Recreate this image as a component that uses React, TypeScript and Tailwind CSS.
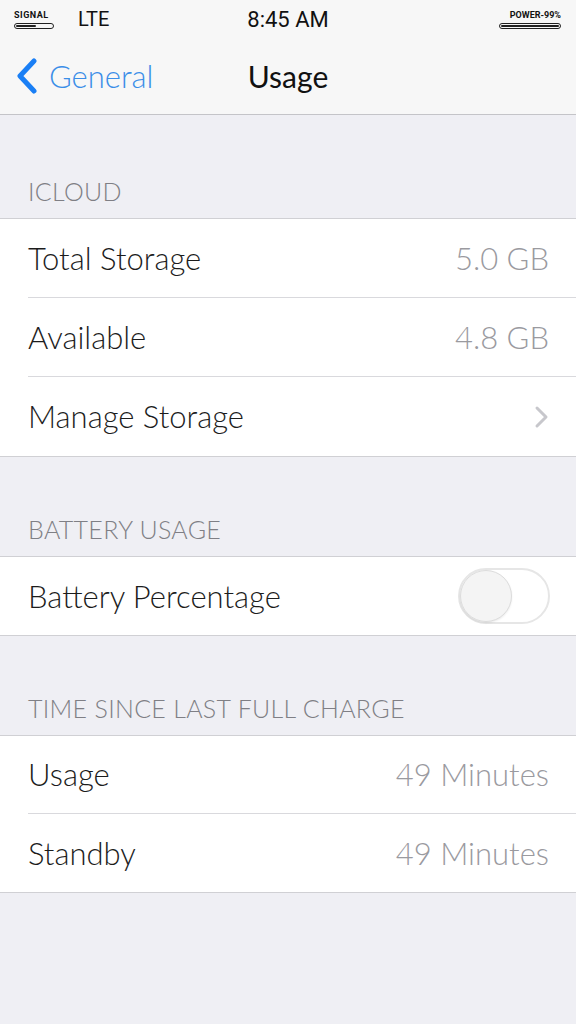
import { ReactNode } from "react";

function Row({ label, value, last, h = "h-[79px]", children }: { label: string; value?: string; last?: boolean; h?: string; children?: ReactNode }) {
  return (
    <div className="pl-[28px]">
      <div className={`flex ${h} items-center justify-between pr-[27px] ${last ? "" : "border-b border-[#d9d9dd]"}`}>
        <span className="text-[31px] font-light text-[#1c1c1c]">{label}</span>
        {value && <span className="text-[31px] font-light text-[#9a9a9f]">{value}</span>}
        {children}
      </div>
    </div>
  );
}

function Header({ title, h = "h-[99px]" }: { title: string; h?: string }) {
  return (
    <div className={`flex ${h} items-end px-[28px] pb-[8px] text-[25px] font-light tracking-[0.3px] text-[#7f7f85]`}>
      {title}
    </div>
  );
}

export default function App() {
  return (
    <div className="min-h-[1024px] w-[576px] bg-[#efeff4] font-['Lato',sans-serif]">
      {/* barre de statut */}
      <div className="bg-[#f7f7f7]">
        <div className="relative flex h-[38px] items-center px-[14px] font-['Roboto',sans-serif] text-[#111]">
          <div className="flex flex-col items-start">
            <span className="text-[9px] font-bold leading-[10px] tracking-[0.5px]">SIGNAL</span>
            <div className="mt-[3px] h-[6px] w-[40px] rounded-full border border-[#222] p-[1px]">
              <div className="h-full w-[20px] rounded-full bg-[#222]" />
            </div>
          </div>
          <span className="ml-[24px] text-[20px]">LTE</span>
          <span className="absolute left-1/2 -translate-x-1/2 text-[22px]">8:45 AM</span>
          <div className="ml-auto mr-[1px] flex flex-col items-end">
            <span className="text-[9px] font-bold leading-[10px]">POWER-99%</span>
            <div className="mt-[3px] h-[6px] w-[62px] rounded-full border border-[#222] p-[1px]">
              <div className="h-full w-full rounded-full bg-[#222]" />
            </div>
          </div>
        </div>

        {/* barre de navigation */}
        <div className="relative flex h-[77px] items-center border-b border-[#c4c4c8]">
          <div className="flex items-center pl-[14px] text-[#3b8ee8]">
            <svg width="24" height="36" viewBox="0 0 24 36" fill="none">
              <path d="M20 3 L6 18 L20 33" stroke="#1a7ff5" strokeWidth="5" strokeLinecap="round" strokeLinejoin="round" />
            </svg>
            <span className="ml-[11px] text-[31px] font-light">General</span>
          </div>
          <span className="absolute left-1/2 -translate-x-1/2 text-[30px] text-[#111]">Usage</span>
        </div>
      </div>

      <Header title="ICLOUD" h="h-[103px]" />
      <div className="border-y border-[#d0d0d4] bg-white">
        <Row label="Total Storage" value="5.0 GB" />
        <Row label="Available" value="4.8 GB" />
        <Row label="Manage Storage" last>
          <svg width="16" height="24" viewBox="0 0 16 24" fill="none" className="mr-[-1px]">
            <path d="M3 3 L12 12 L3 21" stroke="#c7c7cc" strokeWidth="3" strokeLinecap="round" strokeLinejoin="round" />
          </svg>
        </Row>
      </div>

      <Header title="BATTERY USAGE" />
      <div className="border-y border-[#d0d0d4] bg-white">
        <Row label="Battery Percentage" last h="h-[78px]">
          <div className="mr-[-1px] flex h-[56px] w-[92px] items-center rounded-full border-[2px] border-[#e6e6e6] bg-white">
            <div className="h-[52px] w-[52px] rounded-full border border-[#dcdcdc] bg-[#f4f4f4] shadow-[0_1px_2px_rgba(0,0,0,0.08)]" />
          </div>
        </Row>
      </div>

      <Header title="TIME SINCE LAST FULL CHARGE" />
      <div className="border-y border-[#d0d0d4] bg-white">
        <Row label="Usage" value="49 Minutes" h="h-[78px]" />
        <Row label="Standby" value="49 Minutes" last h="h-[78px]" />
      </div>
    </div>
  );
}
